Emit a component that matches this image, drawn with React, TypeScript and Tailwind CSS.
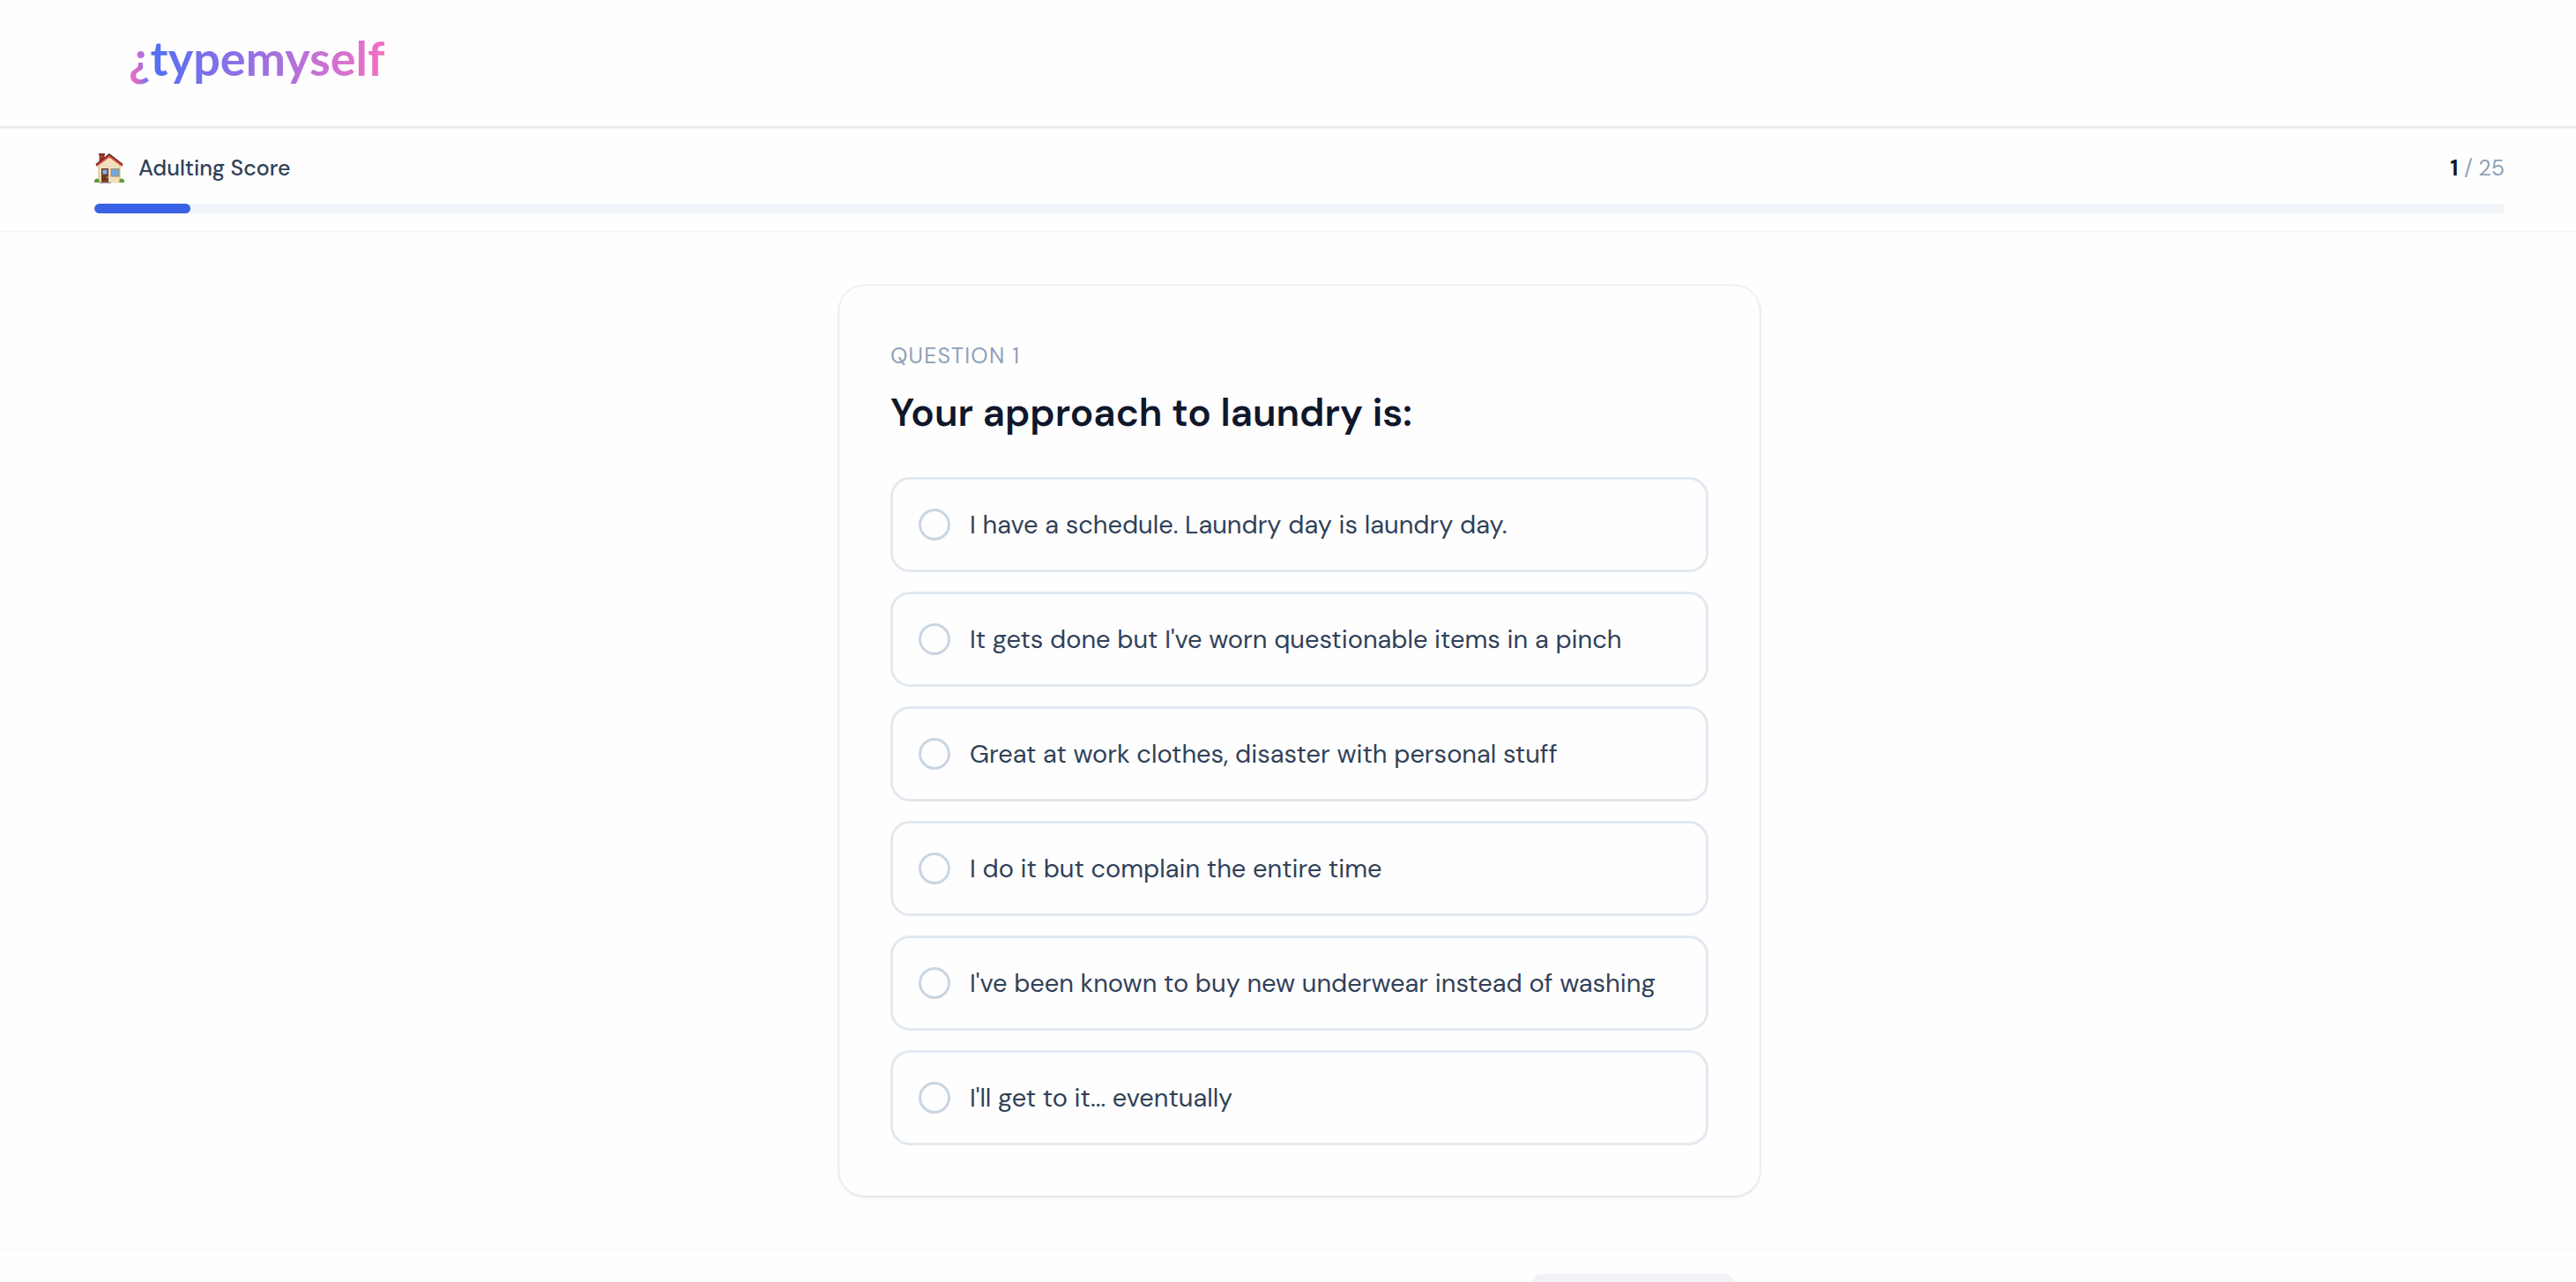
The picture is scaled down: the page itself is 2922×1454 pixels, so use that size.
import { useState } from "react";
import clsx from "clsx";

const TOTAL_QUESTIONS = 25;

const QUESTION = {
  number: 1,
  title: "Your approach to laundry is:",
  options: [
    "I have a schedule. Laundry day is laundry day.",
    "It gets done but I've worn questionable items in a pinch",
    "Great at work clothes, disaster with personal stuff",
    "I do it but complain the entire time",
    "I've been known to buy new underwear instead of washing",
    "I'll get to it... eventually",
  ],
};

function Logo() {
  return (
    <a href="/" className="flex h-[60px] items-baseline font-['Lato',sans-serif] leading-[60px] font-bold">
      <span className="bg-linear-to-r from-[#f76dbd] via-[#c46fd0] to-[#4f6ff5] bg-clip-text text-[54px] text-transparent">
        ¿
      </span>
      <span className="bg-linear-to-r from-[#4f6ff5] via-[#a070e0] to-[#f46fc2] bg-clip-text text-[54px] text-transparent">
        typemyself
      </span>
    </a>
  );
}

function HouseIcon() {
  return (
    <svg viewBox="0 0 34 34" className="h-[34px] w-[34px]" aria-hidden="true">
      {/* Chimney */}
      <path d="M5.500 0.500h6v8l-6 5z" fill="#a63a2c" />
      <path d="M5 0h7v2H5z" fill="#7d2a22" />
      {/* Walls */}
      <path d="M4.500 13 17 3l12.500 10v20.500h-25z" fill="#f0dfba" />
      <path d="M4.500 14H6v19H4.500zM28 14h1.500v19H28z" fill="#dcc79b" />
      {/* Roof */}
      <path d="M17 0 32.500 12l-1 2.500L17 3.800 2.500 14.500l-1-2.500z" fill="#4a2a28" />
      <path d="M17 1.800 32 13l-1 1.800L17 4.600 3 14.800 2 13z" fill="#d9493c" />
      {/* Door */}
      <path d="M8 17h8v16H8z" fill="#6f3a26" />
      <path d="M9.500 18.500h5v5h-5z" fill="#7fb7e6" />
      <path d="M14 26h1v2h-1z" fill="#e0b45c" />
      {/* Window */}
      <path d="M18.500 17h10v9.500h-10z" fill="#a98a62" />
      <path d="M19.500 18h8v7.500h-8z" fill="#72a9de" />
      {/* Step and bushes */}
      <path d="M6 32.500h13V34H6z" fill="#9b9690" />
      <path d="M0 33c-.5-3 1.500-5 3.500-4.500S6 31 5.500 33z" fill="#5f9a35" />
      <path d="M28.500 33c-.5-3 1-4.800 2.800-4.500S34.500 31 34 33z" fill="#5f9a35" />
    </svg>
  );
}

function ProgressHeader({ current }: { current: number }) {
  return (
    <section className="shrink-0 border-b border-gray-100 pt-[27px] pr-[81px] pb-5 pl-[107px]">
      <div className="mb-5 flex h-10 items-center justify-between text-[25px] leading-10">
        <div className="flex items-center gap-4">
          <HouseIcon />
          <span className="font-medium text-slate-700">Adulting Score</span>
        </div>
        <p className="text-slate-400">
          <span className="font-bold text-slate-900">{current}</span> / {TOTAL_QUESTIONS}
        </p>
      </div>
      <div className="h-[11px] overflow-hidden rounded-full bg-slate-100">
        <div
          className="h-full rounded-full bg-[#3861e4]"
          style={{ width: `${(current / TOTAL_QUESTIONS) * 100}%` }}
        />
      </div>
    </section>
  );
}

export default function App() {
  const [selected, setSelected] = useState<string | null>(null);

  return (
    <div className="flex h-screen flex-col overflow-hidden bg-[#fefefe] font-['DM_Sans',sans-serif] antialiased">
      <header className="z-10 shrink-0 border-b-2 border-gray-100 pt-9 pb-[46px] pl-[146px] shadow-sm">
        <Logo />
      </header>

      <ProgressHeader current={QUESTION.number} />

      <main className="shrink-0 pt-[60px] pb-[58px] pl-[26px]">
        <fieldset className="mx-auto w-full max-w-[1046px] rounded-[30px] border border-slate-200 px-[58px] pt-[62px] pb-[57px] shadow-sm">
          <p className="mb-4 text-[25px] leading-9 tracking-wider text-slate-400 uppercase">
            Question {QUESTION.number}
          </p>
          <h1 className="mb-[43px] text-[44px] leading-[60px] font-semibold text-slate-900">
            {QUESTION.title}
          </h1>
          <div className="flex flex-col gap-[22px]">
            {QUESTION.options.map((option) => (
              <label
                key={option}
                className={clsx(
                  "flex h-[108px] cursor-pointer items-center gap-[22px] rounded-[22px] border-3 px-[29px] transition-colors",
                  selected === option ? "border-[#3861e4]" : "border-slate-200"
                )}
              >
                <input
                  type="radio"
                  name="answer"
                  value={option}
                  checked={selected === option}
                  onChange={() => setSelected(option)}
                  className="h-9 w-9 shrink-0 appearance-none rounded-full border-3 border-slate-300 checked:border-[#3861e4] checked:bg-[#3861e4]"
                />
                <span className="text-[29px] leading-10 text-slate-700">{option}</span>
              </label>
            ))}
          </div>
        </fieldset>
      </main>

      <footer className="shrink-0 border-t border-gray-100 pt-[29px] pb-[29px] pl-[26px]">
        <div className="mx-auto flex w-full max-w-[1046px] justify-end px-[29px]">
          <button
            type="button"
            aria-label="Next question"
            disabled={!selected}
            className="h-20 w-[231px] rounded-xl bg-[#3861e4] shadow-xs disabled:bg-[#f1f2f6]"
          />
        </div>
      </footer>
    </div>
  );
}
